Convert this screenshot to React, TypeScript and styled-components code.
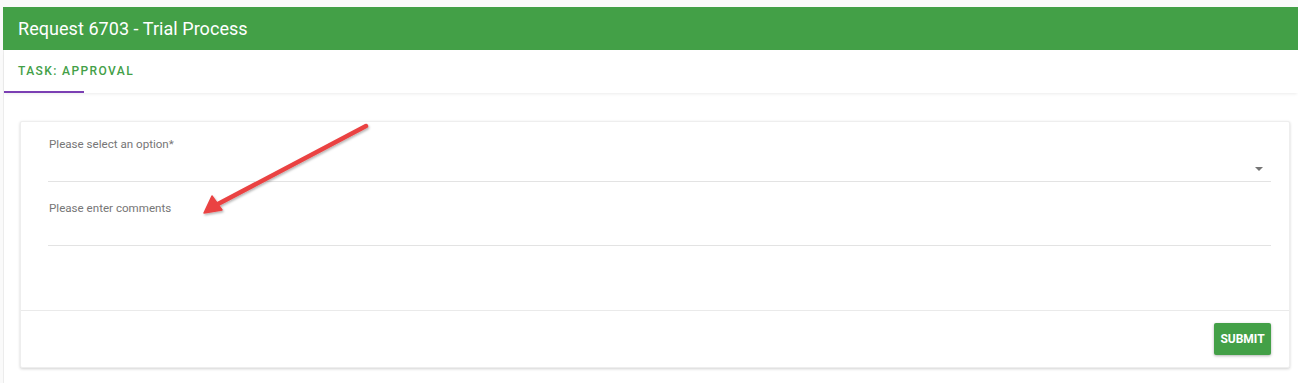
import styled, { createGlobalStyle } from "styled-components";

const GlobalStyle = createGlobalStyle`
  html, body {
    margin: 0;
    padding: 0;
    background: #ffffff;
    font-family: Roboto, "Liberation Sans", Arial, sans-serif;
  }
`;

// ページ全体
const Page = styled.div`
  position: relative;
  width: 1298px;
  height: 383px;
  padding: 7px 0 0 3px;
  box-sizing: border-box;
  overflow: hidden;
  background: #fafafa;
`;

const Panel = styled.div`
  height: 100%;
  background: #ffffff;
  border-left: 1px solid #ececec;
  display: flex;
  flex-direction: column;
`;

// 緑のヘッダー
const Header = styled.div`
  height: 43px;
  margin-left: -1px;
  background: #43a047;
  color: #ffffff;
  display: flex;
  align-items: center;
  padding-left: 15px;
  font-size: 18px;
  letter-spacing: 0.05px;
`;

const TabBar = styled.div`
  height: 43px;
  display: flex;
  box-shadow: 0 2px 3px -1px rgba(0, 0, 0, 0.08);
  position: relative;
  z-index: 1;
`;

const Tab = styled.div<{ active?: boolean }>`
  width: 80px;
  display: flex;
  align-items: center;
  padding-left: 14px;
  box-sizing: border-box;
  white-space: nowrap;
  font-size: 12px;
  font-weight: 500;
  letter-spacing: 1.4px;
  color: #43a047;
  border-bottom: 2px solid ${(p) => (p.active ? "#7b3fb3" : "transparent")};
`;

const Content = styled.div`
  flex: 1;
  padding: 28px 8px 0 16px;
`;

// カード
const Card = styled.div`
  width: 1270px;
  height: 247px;
  background: #ffffff;
  border: 1px solid #eeeeee;
  border-radius: 2px;
  box-shadow: 0 1px 3px rgba(0, 0, 0, 0.18);
  box-sizing: border-box;
  display: flex;
  flex-direction: column;
`;

const Fields = styled.div`
  flex: 1;
  padding: 16px 18px 0 27px;
  display: flex;
  flex-direction: column;
  gap: 20px;
`;

const Field = styled.div`
  height: 44px;
  display: flex;
  flex-direction: column;
  justify-content: space-between;
  border-bottom: 1px solid #e3e3e3;
  box-sizing: border-box;
  padding-bottom: 10px;
`;

const Label = styled.div`
  font-size: 11.6px;
  line-height: 13px;
  color: #767676;
  padding-left: 1px;
`;

const Caret = styled.div`
  align-self: flex-end;
  margin-right: 8px;
  width: 0;
  height: 0;
  border-left: 4px solid transparent;
  border-right: 4px solid transparent;
  border-top: 4px solid #757575;
`;

const Footer = styled.div`
  height: 56px;
  border-top: 1px solid #eaeaea;
  display: flex;
  justify-content: flex-end;
  align-items: center;
  padding-right: 18px;
`;

const SubmitButton = styled.button`
  width: 57px;
  height: 32px;
  border: none;
  border-radius: 2px;
  background: #43a047;
  color: #ffffff;
  font-family: Roboto, "Liberation Sans", Arial, sans-serif;
  font-size: 12px;
  font-weight: 700;
  padding: 0;
  box-shadow: 0 1px 3px rgba(0, 0, 0, 0.3);
`;

// 赤い矢印（注釈）
const Annotation = styled.svg`
  position: absolute;
  left: 0;
  top: 0;
  pointer-events: none;
`;

const App = () => (
  <>
    <GlobalStyle />
    <Page>
      <Panel>
        <Header>Request 6703 - Trial Process</Header>
        <TabBar>
          <Tab active>TASK: APPROVAL</Tab>
        </TabBar>
        <Content>
          <Card>
            <Fields>
              <Field>
                <Label>Please select an option*</Label>
                <Caret />
              </Field>
              <Field>
                <Label>Please enter comments</Label>
              </Field>
            </Fields>
            <Footer>
              <SubmitButton>SUBMIT</SubmitButton>
            </Footer>
          </Card>
        </Content>
      </Panel>
      <Annotation width="1298" height="383">
        <defs>
          <filter id="sh" x="-20%" y="-20%" width="140%" height="140%">
            <feDropShadow dx="1" dy="1.5" stdDeviation="1.2" floodColor="#000" floodOpacity="0.3" />
          </filter>
        </defs>
        <g filter="url(#sh)" fill="#ea4343" stroke="#ea4343" strokeLinecap="round">
          <line x1="366" y1="126" x2="218" y2="204" strokeWidth="4.5" />
          <polygon points="204,213 212,196 222,210" strokeWidth="1.5" strokeLinejoin="round" />
        </g>
      </Annotation>
    </Page>
  </>
);

export default App;
